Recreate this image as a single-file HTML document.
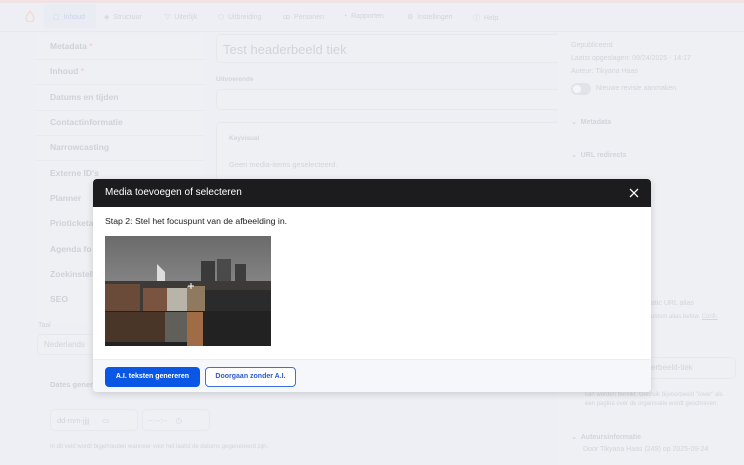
<!DOCTYPE html>
<html><head><meta charset="utf-8"><style>
*{box-sizing:border-box;margin:0;padding:0}
body{width:744px;height:465px;overflow:hidden;background:#eeeff4;font-family:"Liberation Sans",sans-serif;position:relative;color:#d2d4db}
.a{position:absolute;white-space:nowrap}
.top{position:absolute;left:0;top:0;width:744px;height:3px;background:#f1e2e4}
.nav{font-size:7px;color:#d2d4db}
.side{font-size:8.5px;font-weight:bold;color:#cfd1d8}
.line{position:absolute;height:1px;background:#e9eaef}
.box{position:absolute;border:1px solid #e7e8ed;border-radius:5px;background:#eff0f4}
.modal{position:absolute;left:93px;top:179px;width:558px;height:213px;background:#fff;border-radius:4px;overflow:hidden;box-shadow:0 2px 8px rgba(0,0,0,.15)}
.mh{height:28px;background:#1c1c1f;color:#fff;font-size:10px;padding:8px 0 0 12px;position:relative}
.mf{position:absolute;left:0;top:180px;width:558px;height:33px;background:#f6f7fb;border-top:1px solid #eceef3}
.btn{position:absolute;top:7px;height:20px;border-radius:4px;font-size:7px;font-weight:bold;text-align:center;line-height:20px}
</style></head><body>
<div class="top"></div>
<div class="a" style="left:44px;top:4px;width:52px;height:24px;background:#eaecf3"></div>
<svg class="a" style="left:24px;top:10px" width="12" height="12"><path d="M6 1 C4 4 2 6 2 8 A4 4 0 0 0 10 8 C10 6 8 4 6 1Z" fill="none" stroke="#f3d8cf" stroke-width="1.2"/></svg>
<div class="a nav" style="left:53px;top:13px;color:#ccd2ea">▢ &nbsp;Inhoud</div>
<div class="a nav" style="left:104px;top:13px">◈ &nbsp;Structuur</div>
<div class="a nav" style="left:165px;top:13px">▽ &nbsp;Uiterlijk</div>
<div class="a nav" style="left:218px;top:13px">⬡ &nbsp;Uitbreiding</div>
<div class="a nav" style="left:283px;top:13px">ꝏ &nbsp;Personen</div>
<div class="a nav" style="left:343px;top:13px">◔ &nbsp;Rapporten</div>
<div class="a nav" style="left:407px;top:13px">⚙ &nbsp;Instellingen</div>
<div class="a nav" style="left:473px;top:13px">ⓘ &nbsp;Help</div>
<div class="a" style="left:0;top:31px;width:744px;height:1px;background:#e8e9ee"></div>
<div class="a" style="left:36px;top:34px;width:168px;height:290px;background:#eff0f4"></div>
<div class="a side" style="left:50px;top:41px">Metadata <span style="color:#f1d3d3">*</span></div>
<div class="a side" style="left:50px;top:66px">Inhoud <span style="color:#f1d3d3">*</span></div>
<div class="a side" style="left:50px;top:92px">Datums en tijden</div>
<div class="a side" style="left:50px;top:117px">Contactinformatie</div>
<div class="a side" style="left:50px;top:142px">Narrowcasting</div>
<div class="a side" style="left:50px;top:168px">Externe ID's</div>
<div class="a side" style="left:50px;top:193px">Planner</div>
<div class="a side" style="left:50px;top:218px">Prioticketa</div>
<div class="a side" style="left:50px;top:244px">Agenda fo</div>
<div class="a side" style="left:50px;top:269px">Zoekinstell</div>
<div class="a side" style="left:50px;top:294px">SEO</div>
<div class="line" style="left:36px;top:59px;width:168px"></div><div class="line" style="left:36px;top:84px;width:168px"></div><div class="line" style="left:36px;top:110px;width:168px"></div><div class="line" style="left:36px;top:135px;width:168px"></div><div class="line" style="left:36px;top:160px;width:168px"></div>
<div class="a" style="left:38px;top:322px;font-size:7px">Taal</div>
<div class="box" style="left:37px;top:334px;width:60px;height:21px"></div>
<div class="a" style="left:44px;top:340px;font-size:8px">Nederlands</div>
<div class="a side" style="left:50px;top:380px;font-size:7.5px">Dates gener</div>
<div class="box" style="left:50px;top:409px;width:88px;height:22px"></div>
<div class="a" style="left:57px;top:416px;font-size:7.5px">dd-mm-jjjj &nbsp;&nbsp;&nbsp;&nbsp;&nbsp;▭</div>
<div class="box" style="left:142px;top:409px;width:68px;height:22px"></div>
<div class="a" style="left:148px;top:416px;font-size:7.5px">--:--:-- &nbsp;&nbsp;&nbsp;◷</div>
<div class="a" style="left:50px;top:444px;font-size:6px">In dit veld wordt bijgehouden wanneer voor het laatst de datums gegenereerd zijn.</div>
<div class="box" style="left:216px;top:34px;width:350px;height:29px"></div>
<div class="a" style="left:223px;top:42px;font-size:13px">Test headerbeeld tiek</div>
<div class="a" style="left:216px;top:76px;font-size:6.5px;font-weight:bold">Uitvoerende</div>
<div class="box" style="left:216px;top:89px;width:350px;height:21px"></div>
<div class="box" style="left:216px;top:122px;width:350px;height:60px"></div>
<div class="a" style="left:229px;top:135px;font-size:6.5px;font-weight:bold">Keyvisual</div>
<div class="a" style="left:229px;top:160px;font-size:7.5px">Geen media-items geselecteerd.</div>
<div class="a" style="left:558px;top:32px;width:186px;height:433px;background:#eff0f4"></div>
<div class="a" style="left:571px;top:39px;font-size:7px;line-height:13px">Gepubliceerd<br>Laatst opgeslagen: 09/24/2025 - 14:17<br>Auteur: Tikyana Haas</div>
<div class="a" style="left:571px;top:83px;width:20px;height:12px;border-radius:6px;background:#e2e3e8"></div>
<div class="a" style="left:573px;top:85px;width:8px;height:8px;border-radius:4px;background:#f4f5f8"></div>
<div class="a" style="left:596px;top:85px;font-size:7px">Nieuwe revisie aanmaken</div>
<div class="a" style="left:571px;top:118px;font-size:7px;font-weight:bold">⌄ &nbsp;Metadata</div>
<div class="a" style="left:571px;top:151px;font-size:7px;font-weight:bold">⌄ &nbsp;URL redirects</div>
<div class="a" style="left:651px;top:300px;font-size:7px">atic URL alias</div>
<div class="a" style="left:651px;top:314px;font-size:6px">ustom alias below. <span style="color:#d3d6ee;text-decoration:underline">Confi-</span></div>
<div class="box" style="left:570px;top:357px;width:166px;height:22px"></div>
<div class="a" style="left:651px;top:363px;font-size:8px">erbeeld-tiek</div>
<div class="a" style="left:585px;top:382px;font-size:6px;line-height:9px">f pad waarop deze data<br>kan worden bereikt. Gebruik bijvoorbeeld "/over" als<br>een pagina over de organisatie wordt geschreven.</div>
<div class="a" style="left:571px;top:433px;font-size:7px;font-weight:bold">⌄ &nbsp;Auteursinformatie</div>
<div class="a" style="left:583px;top:446px;font-size:7px">Door Tikyana Haas (249) op 2025-09-24</div>

<div class="modal">
  <div class="mh">Media toevoegen of selecteren
    <svg style="position:absolute;right:12px;top:9px" width="10" height="10"><path d="M1 1L9 9M9 1L1 9" stroke="#fff" stroke-width="1.3"/></svg>
  </div>
  <div class="a" style="left:12px;top:37px;font-size:8.7px;color:#222">Stap 2: Stel het focuspunt van de afbeelding in.</div>
  <svg class="a" style="left:12px;top:57px" width="166" height="110" viewBox="0 0 166 110">
    <defs><linearGradient id="s" x1="0" y1="0" x2="0" y2="1"><stop offset="0" stop-color="#6b6b6b"/><stop offset="1" stop-color="#a5a5a5"/></linearGradient></defs>
    <rect width="166" height="110" fill="url(#s)"/>
    <rect x="96" y="25" width="14" height="30" fill="#3a3a3a"/><rect x="112" y="23" width="14" height="32" fill="#4a4a4a"/><rect x="130" y="28" width="11" height="28" fill="#3d3d3d"/>
    <path d="M52 28 L60 36 L60 55 L52 55Z" fill="#ddd"/>
    <rect x="0" y="45" width="166" height="30" fill="#3e3a38"/>
    <rect x="0" y="48" width="35" height="27" fill="#6a4a38"/><rect x="38" y="52" width="25" height="23" fill="#7a5440"/>
    <rect x="62" y="52" width="24" height="24" fill="#b9b4aa"/><rect x="82" y="50" width="18" height="26" fill="#8f7a60"/>
    <rect x="100" y="54" width="66" height="22" fill="#2b2b2b"/>
    <rect x="0" y="75" width="166" height="35" fill="#222"/>
    <rect x="0" y="76" width="60" height="30" fill="#5a3e2c" opacity=".7"/><rect x="82" y="76" width="16" height="34" fill="#c08050" opacity=".8"/>
    <rect x="60" y="76" width="22" height="30" fill="#8a8880" opacity=".6"/>
    <path d="M83 50h6M86 47v6" stroke="#fff" stroke-width="1"/>
  </svg>
  <div class="mf">
    <div class="btn" style="left:12px;width:95px;background:#0a57e6;color:#fff">A.I. teksten genereren</div>
    <div class="btn" style="left:112px;width:91px;border:1px solid #3e6fe0;color:#2a5ad0;background:#fff;line-height:18px">Doorgaan zonder A.I.</div>
  </div>
</div>
</body></html>
